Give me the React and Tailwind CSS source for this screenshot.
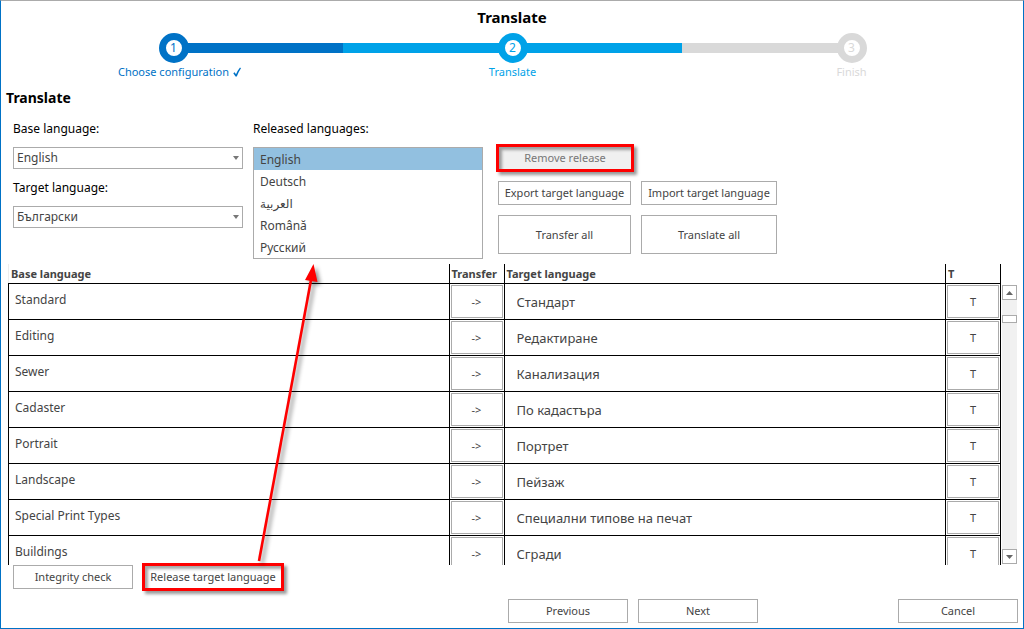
import { useState } from "react";

const LANGUAGES = ["English", "Deutsch", "العربية", "Română", "Русский"];

const ROWS = [
  ["Standard", "Стандарт"],
  ["Editing", "Редактиране"],
  ["Sewer", "Канализация"],
  ["Cadaster", "По кадастъра"],
  ["Portrait", "Портрет"],
  ["Landscape", "Пейзаж"],
  ["Special Print Types", "Специални типове на печат"],
  ["Buildings", "Сгради"],
];

const STEPS = [
  { label: "Choose configuration", done: true, bar: "bg-[#0072c6]", ring: "border-[#0072c6]", text: "text-[#0072c6]", place: "left-1/2 right-0" },
  { label: "Translate", bar: "bg-[#00a2e8]", ring: "border-[#00a2e8]", text: "text-[#00a2e8]", place: "left-0 right-0" },
  { label: "Finish", bar: "bg-[#d9d9d9]", ring: "border-[#d9d9d9]", text: "text-[#d9d9d9]", place: "left-0 right-1/2" },
];

function Button({ className = "", children, ...rest }) {
  return (
    <button
      type="button"
      className={`flex items-center justify-center whitespace-nowrap border border-[#ababab] text-[11px] leading-4 ${className}`}
      {...rest}
    >
      {children}
    </button>
  );
}

function Highlight({ children, className }) {
  return (
    <div className={`relative ${className}`}>
      {children}
      <div className="pointer-events-none absolute -inset-0.5 border-3 border-[#fe0000] shadow-[3px_3px_3px_rgba(0,0,0,0.4),inset_3px_3px_3px_rgba(0,0,0,0.35)]" />
    </div>
  );
}

function Combo({ id, label, value, options }) {
  return (
    <div className="flex flex-col">
      <label htmlFor={id} className="text-xs leading-5 text-black">
        {label}
      </label>
      <div className="relative mt-2">
        <select
          id={id}
          defaultValue={value}
          className="block h-[22px] w-full appearance-none rounded-none border border-[#ababab] bg-white pl-[3px] text-xs leading-5 outline-none"
        >
          {options.map((o) => (
            <option key={o}>{o}</option>
          ))}
        </select>
        <svg className="pointer-events-none absolute right-1 top-2 h-1.5 w-1.5" viewBox="0 0 6 6">
          <path d="M0 1h6L3 5z" fill="#777" />
        </svg>
      </div>
    </div>
  );
}

function Steps() {
  return (
    <ol className="ml-[3px] mr-0.5 grid grid-cols-3">
      {STEPS.map((s, i) => (
        <li key={s.label} className={`relative flex flex-col items-center ${s.text}`}>
          <div className={`absolute top-2.5 h-2.5 ${s.bar} ${s.place}`} />
          <div className={`relative flex h-[30px] w-[30px] items-center justify-center rounded-full border-7 bg-white text-xs leading-4 ${s.ring}`}>
            {i + 1}
          </div>
          <div className={`flex items-center gap-1 text-[11px] leading-[18px] ${s.done ? "pl-3" : ""}`}>
            {s.label}
            {s.done && (
              <svg className="h-2.5 w-2" viewBox="0 0 8 10" aria-label="done">
                <path d="M0.3 6.2L1.6 5.3 3 7.2Q4.6 3.6 7 .6L8 1.2Q5.4 5 3.8 9.4H2.5Z" fill="currentColor" />
              </svg>
            )}
          </div>
        </li>
      ))}
    </ol>
  );
}

function ScrollBar() {
  return (
    <div className="mb-px mt-[21px] flex w-[15px] flex-col bg-[#f1f1f1]">
      <button type="button" aria-label="Scroll up" className="flex h-[15px] shrink-0 items-center justify-center border border-[#ababab] bg-white">
        <svg className="h-1 w-[7px]" viewBox="0 0 7 4">
          <path d="M0 4h7L3.5 0z" fill="#666" />
        </svg>
      </button>
      <div className="flex-1 pt-[15px]">
        <div className="h-2 border border-[#ababab] bg-white" />
      </div>
      <button type="button" aria-label="Scroll down" className="flex h-[15px] shrink-0 items-center justify-center border border-[#ababab] bg-white">
        <svg className="h-1 w-[7px]" viewBox="0 0 7 4">
          <path d="M0 0h7L3.5 4z" fill="#666" />
        </svg>
      </button>
    </div>
  );
}

function TranslationTable() {
  const th = "border-r border-black pl-0.5 text-left font-bold";
  const td = "border-r border-t border-black";
  return (
    <div className="min-w-0 flex-1 overflow-hidden">
      <table className="w-full table-fixed border-separate border-spacing-0">
        <thead>
          <tr className="h-[19px] text-[11px] leading-[19px]">
            <th className={`border-l border-l-[#eee] ${th}`}>Base language</th>
            <th className={`w-[55px] ${th}`}>Transfer</th>
            <th className={th}>Target language</th>
            <th className={`w-[55px] ${th}`}>T</th>
          </tr>
        </thead>
        <tbody>
          {ROWS.map(([base, target]) => (
            <tr key={base} className="h-9">
              <td className={`border-l pl-1.5 pt-1.5 align-top text-xs leading-5 ${td}`}>{base}</td>
              <td className={`p-px ${td}`}>
                <Button className="h-[33px] w-full" aria-label={`Transfer ${base}`}>{"->"}</Button>
              </td>
              <td className={`pl-3 ${td}`}>
                <input
                  aria-label={`Target text for ${base}`}
                  defaultValue={target}
                  className="block h-[35px] w-full bg-transparent text-[13px] outline-none"
                />
              </td>
              <td className={`p-px ${td}`}>
                <Button className="h-[33px] w-full" aria-label={`Translate ${base}`}>T</Button>
              </td>
            </tr>
          ))}
        </tbody>
      </table>
    </div>
  );
}

export default function App() {
  const [selected, setSelected] = useState("English");
  return (
    <main className="relative flex h-screen flex-col overflow-hidden border border-[#0072c6] border-t-[#ababab] bg-white font-['Noto_Sans','DejaVu_Sans',sans-serif] text-[#444]">
      <h1 className="mt-1.5 text-center text-[15px] font-bold leading-5 text-black">Translate</h1>
      <div className="mt-1.5">
        <Steps />
      </div>
      <h2 className="ml-[5px] mt-[7px] text-sm font-bold leading-5 text-black">Translate</h2>

      <section className="ml-3 mt-[11px] flex h-[140px] shrink-0">
        <div className="flex w-[230px] flex-col gap-[9px]">
          <Combo id="base-language" label="Base language:" value="English" options={["English", "Deutsch"]} />
          <Combo id="target-language" label="Target language:" value="Български" options={["Български", "English"]} />
        </div>
        <div className="ml-2.5 w-[230px]">
          <div id="released" className="text-xs leading-5 text-black">Released languages:</div>
          <ul role="listbox" aria-labelledby="released" className="mt-2 border border-[#ababab]">
            {LANGUAGES.map((l) => (
              <li
                key={l}
                role="option"
                aria-selected={l === selected}
                onClick={() => setSelected(l)}
                className={`h-[22px] pl-1.5 text-xs leading-[23px] ${l === selected ? "bg-[#92c0e0]" : ""}`}
              >
                {l}
              </li>
            ))}
          </ul>
        </div>
        <div className="ml-[15px] mt-[27px] flex flex-col gap-2.5">
          <Highlight className="mb-px w-[134px]">
            <Button disabled className="h-6 w-full bg-[#f0f0f0] text-[#777]">Remove release</Button>
          </Highlight>
          <div className="flex gap-2.5">
            <Button className="h-6 w-[133px]">Export target language</Button>
            <Button className="h-6 w-[136px]">Import target language</Button>
          </div>
          <div className="flex gap-2.5">
            <Button className="h-[39px] w-[133px]">Transfer all</Button>
            <Button className="h-[39px] w-[136px]">Translate all</Button>
          </div>
        </div>
      </section>

      <section className="ml-[7px] mr-1.5 mt-[5px] flex min-h-0 flex-1 gap-px">
        <TranslationTable />
        <ScrollBar />
      </section>

      <div className="ml-3 flex gap-[11px]">
        <Button className="h-6 w-[120px]">Integrity check</Button>
        <Highlight className="w-[138px]">
          <Button className="h-6 w-full">Release target language</Button>
        </Highlight>
      </div>

      <footer className="mb-[5px] ml-auto mr-[5px] mt-2.5 flex gap-2.5">
        <Button className="h-6 w-[120px]">Previous</Button>
        <Button className="mr-[130px] h-6 w-[120px]">Next</Button>
        <Button className="h-6 w-[120px]">Cancel</Button>
      </footer>

      <svg className="pointer-events-none absolute left-[249px] top-[259px] h-[310px] w-20 drop-shadow-[3px_3px_2px_rgba(0,0,0,0.45)]" viewBox="250 260 80 310" aria-hidden="true">
        <path d="M259 561L311 280" stroke="#fe0000" strokeWidth="2.6" fill="none" />
        <path d="M313.5 264L305 280 317.5 282Z" fill="#fe0000" />
      </svg>
    </main>
  );
}
